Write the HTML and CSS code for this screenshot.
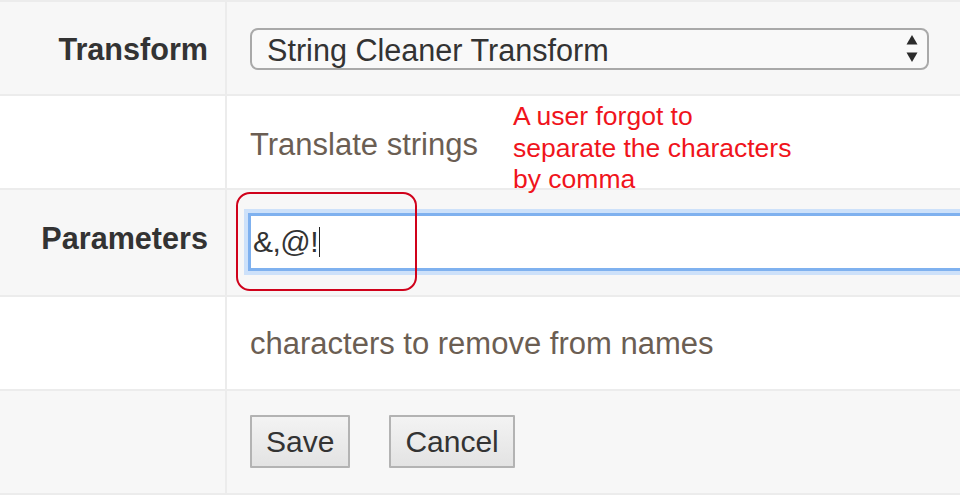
FILE: index.html
```
<!DOCTYPE html>
<html>
<head>
<meta charset="utf-8">
<link rel="stylesheet" href="styles.css">
</head>
<body>
<div class="form">
  <div class="row shade">
    <div class="label label-transform">Transform</div>
    <div class="cell cell-select">
      <div class="select">
        <span class="select-text">String Cleaner Transform</span>
        <svg class="arrows" width="12" height="28" viewBox="0 0 12 28">
          <path d="M6 0 L11.5 9.5 L0.5 9.5 Z" fill="#2b2b2b"/>
          <path d="M0.5 17.5 L11.5 17.5 L6 27 Z" fill="#2b2b2b"/>
        </svg>
      </div>
    </div>
  </div>
  <div class="row">
    <div class="label"></div>
    <div class="cell cell-text cell-text-first">
      <span class="help">Translate strings</span>
      <div class="note">A user forgot to<br>separate the characters<br>by comma</div>
    </div>
  </div>
  <div class="row shade">
    <div class="label label-params">Parameters</div>
    <div class="cell cell-input">
      <div class="input"><span class="value">&amp;,@!</span><span class="caret"></span></div>
      <div class="highlight"></div>
    </div>
  </div>
  <div class="row">
    <div class="label"></div>
    <div class="cell cell-text cell-text-second">
      <span class="help">characters to remove from names</span>
    </div>
  </div>
  <div class="row shade">
    <div class="label"></div>
    <div class="cell cell-buttons">
      <button class="btn">Save</button>
      <button class="btn">Cancel</button>
    </div>
  </div>
</div>
</body>
</html>
```
FILE: styles.css
```
* { box-sizing: border-box; }
html, body { margin: 0; padding: 0; background: #fff; }
body {
  font-family: "Liberation Sans", Arial, Helvetica, sans-serif;
  font-size: 30px;
  color: #333;
  width: 980px;
  height: 502px;
  overflow: hidden;
}
.form {
  width: 960px;
  border-top: 2px solid #ececec;
  overflow: hidden;
}
.row {
  display: grid;
  grid-template-columns: 227px 1fr;
  border-bottom: 2px solid #ececec;
  background: #fff;
}
.row.shade { background: #f7f7f7; }
.label {
  border-right: 2px solid #ececec;
  display: flex;
  align-items: center;
  justify-content: flex-end;
  padding-right: 17px;
  font-weight: bold;
  color: #333;
  font-size: 30.6px;
}
.label-transform { padding-top: 2px; }
.label-params { padding-bottom: 8px; }
.cell {
  position: relative;
  display: flex;
  align-items: center;
  padding-left: 23px;
}
.cell-select { padding-top: 26px; padding-bottom: 24px; }
.select {
  width: 679px;
  height: 42px;
  border: 2px solid #a9a9a9;
  border-radius: 8px;
  background: #f9f9f9;
  display: flex;
  align-items: center;
  justify-content: space-between;
  padding: 2px 9px 0 15px;
  color: #333;
  font-size: 30.6px;
}
.select-text { line-height: 1; }
.arrows { display: block; margin-top: -2px; }
.cell-text { line-height: 34px; font-size: 31px; }
.cell-text-first { padding-top: 32px; padding-bottom: 26px; }
.cell-text-second { padding-top: 30px; padding-bottom: 28px; }
.help { color: #6b5e53; }
.note {
  position: absolute;
  left: 286px;
  top: 5px;
  font-size: 26.5px;
  line-height: 31.5px;
  color: #f0141c;
}
.cell-input { padding-top: 23px; padding-bottom: 24px; }
.input {
  width: 760px;
  height: 58px;
  margin-left: -2px;
  border: 3px solid #7fb1ef;
  box-shadow: 0 0 0 4px #cde1fa;
  background: #fff;
  display: flex;
  align-items: center;
  padding-left: 2px;
  color: #333;
}
.value { letter-spacing: -0.5px; }
.caret {
  display: inline-block;
  width: 1px;
  height: 30px;
  background: #222;
  margin-left: 1px;
}
.highlight {
  position: absolute;
  left: 9px;
  top: 2px;
  width: 181px;
  height: 99px;
  border: 2px solid #d0021b;
  border-radius: 14px;
}
.cell-buttons { padding-top: 24px; padding-bottom: 25px; gap: 39px; }
.btn {
  font-family: "Liberation Sans", Arial, Helvetica, sans-serif;
  font-size: 30px;
  color: #333;
  height: 53px;
  padding: 0 14px;
  border: 2px solid #b3b3b3;
  border-radius: 1px;
  background: linear-gradient(#f3f3f3, #e3e3e3);
}
```
